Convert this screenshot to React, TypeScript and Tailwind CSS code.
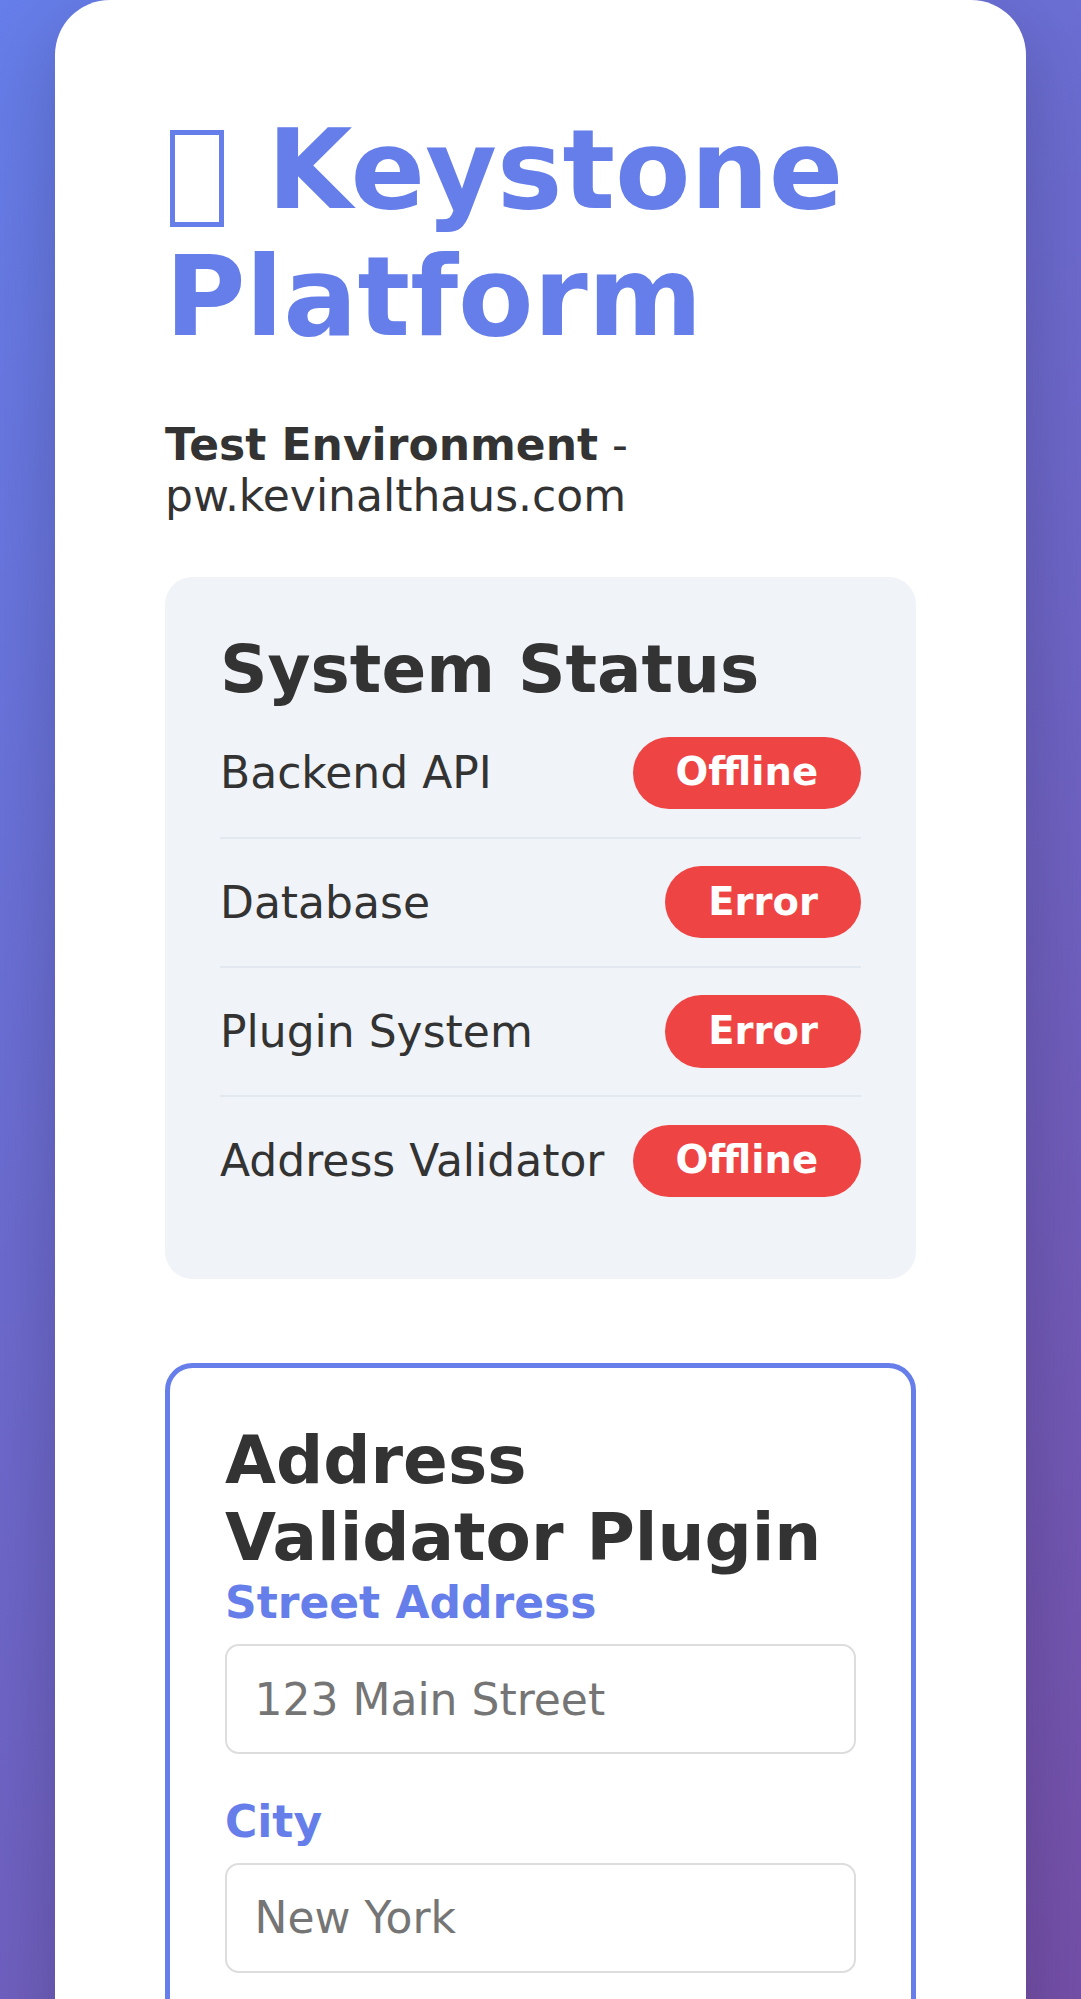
import React from "react";

const rows = [
  { label: "Backend API", status: "Offline" },
  { label: "Database", status: "Error" },
  { label: "Plugin System", status: "Error" },
  { label: "Address Validator", status: "Offline" },
];

function Field({ label, placeholder }: { label: string; placeholder: string }) {
  return (
    <div className="mb-[41.25px]">
      <label className="block text-[44px] leading-[51.2px] font-bold text-[#667eea] mb-[16px]">
        {label}
      </label>
      <input
        type="text"
        placeholder={placeholder}
        className="block w-full bg-white border-[2.75px] border-[#dddddd] rounded-[13.75px] px-[27.5px] py-[27.5px] text-[44px] leading-[51.2px] text-[#333333] placeholder:text-[#757575] outline-none"
      />
    </div>
  );
}

export default function App() {
  return (
    <div className="h-[1999px] overflow-hidden bg-[linear-gradient(135deg,#667eea_0%,#764ba2_100%)] [background-size:100%_2300px] bg-no-repeat bg-[#6f52a6] px-[55px] font-['DejaVu_Sans',sans-serif] text-[#333333]">
      <div className="bg-white rounded-[55px] px-[110px] pt-[107px] pb-[110px] shadow-[0_27px_82px_rgba(0,0,0,0.2)]">
        <h1 className="text-[110px] leading-[127px] font-bold text-[#667eea]">
          <span className="inline-block ml-[5px] mr-[5px] w-[54px] h-[97px] border-[5px] border-[#667eea] align-[-19px]" aria-hidden="true"></span>{" "}
          Keystone Platform
        </h1>
        <p className="mt-[58px] text-[44px] leading-[51.2px]">
          <strong className="font-bold">Test Environment</strong> - pw.kevinalthaus.com
        </p>

        <div className="mt-[56px] bg-[#f0f3f8] rounded-[27.5px] p-[55px]">
          <h2 className="text-[66px] leading-[76.8px] font-bold text-[#333333]">System Status</h2>
          {rows.map((r, i) => (
            <div
              key={r.label}
              className={
                i < rows.length - 1
                  ? "flex items-center justify-between py-[27.5px] border-b-[2.75px] border-[#e2e8f0]"
                  : "flex items-center justify-between py-[27.5px]"
              }
            >
              <span className="text-[44px] leading-[51.2px]">{r.label}</span>
              <span className="bg-[#ef4444] text-white font-bold text-[38.5px] leading-[44.8px] px-[43px] py-[13.75px] rounded-full">
                {r.status}
              </span>
            </div>
          ))}
        </div>

        <div className="mt-[84px] border-[5.5px] border-[#667eea] rounded-[27.5px] p-[55px]">
          <h3 className="text-[66px] leading-[76.8px] font-bold text-[#333333]">Address Validator Plugin</h3>
          <Field label="Street Address" placeholder="123 Main Street" />
          <Field label="City" placeholder="New York" />
        </div>
      </div>
    </div>
  );
}
